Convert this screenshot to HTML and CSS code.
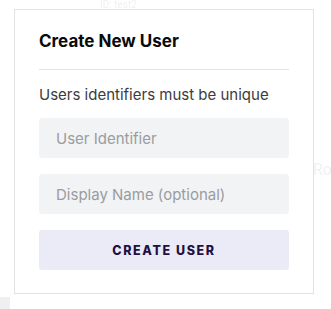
FILE: index.html
```html
<!DOCTYPE html>
<html lang="en">
<head>
    <meta charset="UTF-8">
    <meta name="viewport" content="width=device-width, initial-scale=1.0">
    <title>Create New User</title>
    <link rel="stylesheet" href="styles.css">
</head>
<body>
    <div class="backdrop">
        <span class="ghost ghost-id">ID: test2</span>
        <span class="ghost ghost-ro">Ro</span>
        <span class="ghost-block"></span>
    </div>
    <div class="card">
        <h3 class="card-title">Create New User</h3>
        <p class="card-hint">Users identifiers must be unique</p>
        <form class="card-form">
            <input type="text" class="field" placeholder="User Identifier">
            <input type="text" class="field" placeholder="Display Name (optional)">
            <button type="button" class="btn-create">CREATE USER</button>
        </form>
    </div>
</body>
</html>
```

FILE: styles.css
```css
body {
    margin: 0;
    background: #ffffff;
    font-family: 'Inter', sans-serif;
    padding: 9px 0 0 14px;
}

.backdrop {
    position: fixed;
    inset: 0;
    z-index: -1;
}

.ghost {
    position: absolute;
    color: #f1f1f4;
    font-family: 'Roboto', sans-serif;
}

.ghost-id {
    top: 0;
    left: 100px;
    font-size: 10px;
    line-height: 10px;
}

.ghost-ro {
    top: 160px;
    left: 313px;
    font-size: 16px;
}

.ghost-block {
    position: absolute;
    left: 0;
    top: 297px;
    width: 10px;
    height: 12px;
    background: #efeff2;
}

.card {
    width: 250px;
    padding: 20px 24px 23px;
    border: 1px solid #e2e2e2;
    background: #fff;
}

.card-title {
    margin: 0;
    font-size: 17px;
    font-weight: 700;
    line-height: 23px;
    color: #0a0a0a;
    padding-bottom: 16px;
    border-bottom: 1px solid #e4e4e4;
}

.card-hint {
    margin: 0;
    padding: 14px 0 12px;
    font-size: 15px;
    line-height: 22px;
    color: #3c3c3c;
}

.card-form {
    display: flex;
    flex-direction: column;
    gap: 16px;
}

.field {
    box-sizing: border-box;
    height: 40px;
    width: 100%;
    border: none;
    border-radius: 3px;
    background: #f1f3f5;
    padding: 0 17px;
    font-family: 'Inter', sans-serif;
    font-size: 15px;
    outline: none;
}

.field::placeholder {
    color: #9a9ca0;
}

.btn-create {
    height: 40px;
    border: none;
    border-radius: 3px;
    background: #ebebf8;
    color: #1f1142;
    font-family: 'Inter', sans-serif;
    font-size: 12.5px;
    font-weight: 800;
    letter-spacing: 1.6px;
    cursor: pointer;
}
```
